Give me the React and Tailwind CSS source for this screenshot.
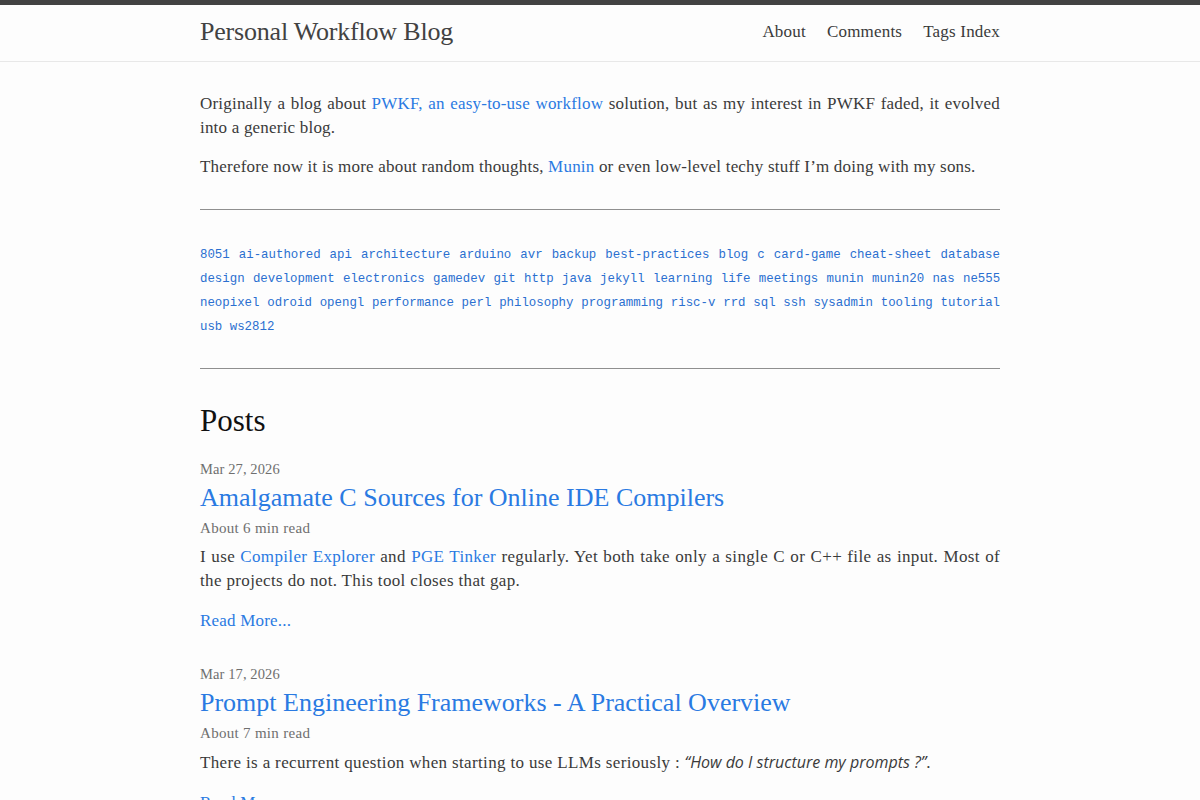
import React from "react";

const serif = { fontFamily: '"Liberation Serif", "Times New Roman", serif' };
const mono = { fontFamily: '"Liberation Mono", "DejaVu Sans Mono", monospace' };

const tags = [
  "8051", "ai-authored", "api", "architecture", "arduino", "avr", "backup",
  "best-practices", "blog", "c", "card-game", "cheat-sheet", "database",
  "design", "development", "electronics", "gamedev", "git", "http", "java",
  "jekyll", "learning", "life", "meetings", "munin", "munin20", "nas", "ne555",
  "neopixel", "odroid", "opengl", "performance", "perl", "philosophy",
  "programming", "risc-v", "rrd", "sql", "ssh", "sysadmin", "tooling",
  "tutorial", "usb", "ws2812",
];

function Link({ children }) {
  return <a href="#" className="text-[#2a7ae2]">{children}</a>;
}

function Post({ date, title, read, children }) {
  return (
    <li className="mb-[31px]">
      <div className="text-[14.5px] leading-[21px] tracking-[0.1px] text-[#6f6f6f]">{date}</div>
      <h3 className="mt-[2px] text-[26px] leading-[32px] tracking-normal text-[#2a7ae2]">
        <a href="#">{title}</a>
      </h3>
      <div className="mt-[4px] text-[15px] leading-[21px] tracking-[0.3px] text-[#6f6f6f]">{read}</div>
      <p className="mt-[6px] text-justify tracking-[0.35px]">{children}</p>
      <p className="mt-[16px]">
        <Link>Read More...</Link>
      </p>
    </li>
  );
}

export default function App() {
  return (
    <div
      className="min-h-screen bg-[#fdfdfd] text-[17px] leading-[24px] tracking-[0.2px] text-[#3a3a3a]"
      style={serif}
    >
      <header className="border-t-[5px] border-b border-t-[#424242] border-b-[#e8e8e8]">
        <div className="mx-auto flex h-[56px] w-[800px] items-center justify-between">
          <a href="#" className="pb-[2px] text-[26px] tracking-[-0.2px] text-[#424242]">
            Personal Workflow Blog
          </a>
          <nav className="flex gap-[21px] pb-[2px] text-[17px] tracking-[0.2px] text-[#3a3a3a]">
            <a href="#">About</a>
            <a href="#">Comments</a>
            <a href="#">Tags Index</a>
          </nav>
        </div>
      </header>

      <main className="mx-auto w-[800px] pt-[30px]">
        <p className="text-justify">
          Originally a blog about <Link>PWKF, an easy-to-use workflow</Link> solution, but as my
          interest in PWKF faded, it evolved into a generic blog.
        </p>
        <p className="mt-[15px]">
          Therefore now it is more about random thoughts, <Link>Munin</Link> or even low-level techy
          stuff I’m doing with my sons.
        </p>

        <hr className="mt-[30px] border-t border-[#8f8f8f]" />

        <div
          className="mt-[33px] text-justify text-[12.4px] leading-[24px] tracking-normal text-[#2a6fd0]"
          style={mono}
        >
          {tags.map((t, i) => (
            <React.Fragment key={t}>
              <a href="#">{t}</a>
              {i < tags.length - 1 ? " " : ""}
            </React.Fragment>
          ))}
        </div>

        <hr className="mt-[29px] border-t border-[#8f8f8f]" />

        <h2 className="mt-[32px] text-[31px] leading-[40px] tracking-normal text-[#111]">Posts</h2>

        <ul className="mt-[18px]">
          <Post date="Mar 27, 2026" title="Amalgamate C Sources for Online IDE Compilers" read="About 6 min read">
            I use <Link>Compiler Explorer</Link> and <Link>PGE Tinker</Link> regularly. Yet both take
            only a single C or C++ file as input. Most of the projects do not. This tool closes that gap.
          </Post>
          <Post date="Mar 17, 2026" title="Prompt Engineering Frameworks - A Practical Overview" read="About 7 min read">
            There is a recurrent question when starting to use LLMs seriously :{" "}
            <em
              className="text-[16px] tracking-normal"
              style={{ fontFamily: '"Open Sans", "Noto Sans", sans-serif' }}
            >
              “How do I structure my prompts ?”
            </em>
            .
          </Post>
        </ul>
      </main>
    </div>
  );
}
